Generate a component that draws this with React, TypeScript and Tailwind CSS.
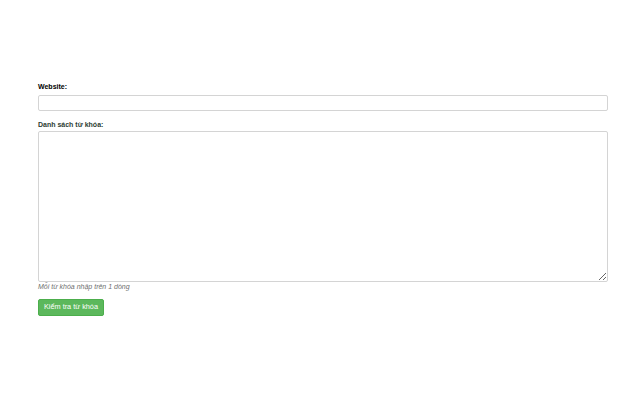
export default function App() {
  return (
    <div className="w-[640px] h-[400px] bg-white font-['Liberation_Sans',Arial,sans-serif]">
      <div className="pt-[82px] pl-[38px] w-[608px]">
        <label className="block text-[7px] leading-[10px] font-bold text-black">Website:</label>
        <input
          type="text"
          className="mt-[3px] block w-full h-[16px] border border-[#d4d4d4] rounded-[2px] bg-white outline-none"
        />
        <label className="mt-[9px] block text-[7px] leading-[10px] font-bold text-[#2d3d33]">
          Danh sách từ khóa:
        </label>
        <textarea className="mt-[1px] block w-full h-[151px] border border-[#d4d4d4] rounded-[2px] bg-white outline-none" />
        <p className="mt-0 text-[7px] leading-[10px] italic text-[#707070]">Mỗi từ khóa nhập trên 1 dòng</p>
        <button className="mt-[5px] h-[17px] px-[5px] rounded-[2px] bg-[#5cb85c] border border-[#4cae4c] text-white text-[7.3px] leading-[10px]">
          Kiểm tra từ khóa
        </button>
      </div>
    </div>
  );
}
